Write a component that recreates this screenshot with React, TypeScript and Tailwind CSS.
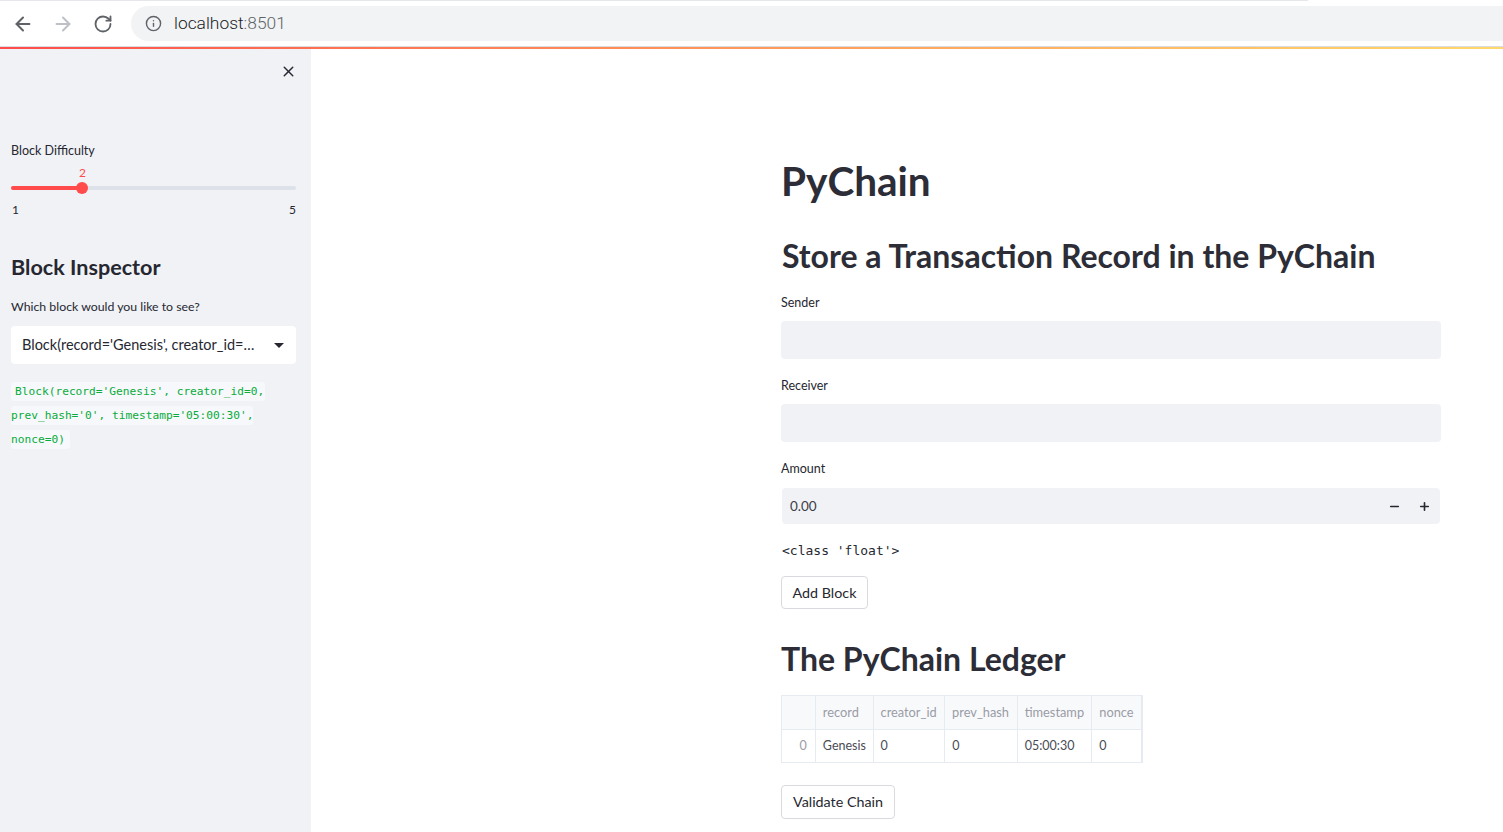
import React from "react";
import { ArrowLeft, ArrowRight, RotateCw, Info, X, Minus, Plus } from "lucide-react";

const sans = "font-['Lato','Noto_Sans',sans-serif]";

function Field({ label }: { label: string }) {
  return (
    <div className="flex flex-col">
      <div className="h-[18px] text-[12.5px] leading-[18px] text-[#262730]">{label}</div>
      <div className="mt-[9px] h-[38px] rounded-[4px] bg-[#f0f2f6]" />
    </div>
  );
}

const headers = [
  { t: "", w: "w-[34px]" },
  { t: "record", w: "w-[58px]" },
  { t: "creator_id", w: "w-[72px]" },
  { t: "prev_hash", w: "w-[73px]" },
  { t: "timestamp", w: "w-[75px]" },
  { t: "nonce", w: "w-[49px]" },
];
const row = ["0", "Genesis", "0", "0", "05:00:30", "0"];

export default function App() {
  return (
    <div className={`flex h-[832px] w-[1503px] flex-col overflow-hidden bg-white ${sans}`}>
      <header className="relative flex h-[46px] shrink-0 items-start bg-white pt-[6px]">
        <div className="absolute left-0 top-0 h-[1px] w-[1308px] bg-[#e5e7eb]" />
        <div className="flex h-[35px] w-[131px] shrink-0 items-center pl-[12px]">
          <ArrowLeft size={22} strokeWidth={2.2} className="text-[#5f6368]" />
          <ArrowRight size={22} strokeWidth={2.2} className="ml-[18px] text-[#bdc1c6]" />
          <RotateCw size={20} strokeWidth={2.2} className="ml-[19px] text-[#5f6368]" />
        </div>
        <div className="flex h-[35px] flex-1 items-center rounded-l-[18px] bg-[#f1f3f4] pl-[14px]">
          <Info size={17} strokeWidth={2} className="text-[#5f6368]" />
          <span className="ml-[12px] font-['Roboto',sans-serif] text-[17.4px] font-light text-[#202124]">
            localhost<span className="text-[#5f6368]">:8501</span>
          </span>
        </div>
      </header>
      <div className="h-[3px] shrink-0 border-t border-[#dadce0] bg-gradient-to-r from-[#ff4b4b] to-[#ffd86b]" />
      <div className="flex min-h-0 flex-1">
        <aside className="flex w-[311px] shrink-0 flex-col bg-[#f0f2f6] px-[11px]">
          <div className="flex h-[44px] items-center justify-end pr-[3px]">
            <X size={17} strokeWidth={2} className="text-[#262730]" />
          </div>
          <div className="mt-[49px] h-[18px] text-[12.5px] leading-[18px] text-[#262730]">Block Difficulty</div>
          <div className="relative mt-[26px] h-[4px] w-[285px] rounded-full bg-[#dde1ea]">
            <div className="h-[4px] w-[71px] rounded-full bg-[#ff4b4b]" />
            <div className="absolute left-[65px] top-[-4px] h-[12px] w-[12px] rounded-full bg-[#ff4b4b]" />
            <div className="absolute left-[68px] top-[-21px] text-[12px] leading-[16px] text-[#ff4b4b]">2</div>
          </div>
          <div className="mt-[12px] flex w-[285px] justify-between text-[12px] leading-[16px] text-[#262730]">
            <span className="pl-[1px]">1</span>
            <span>5</span>
          </div>
          <h2 className="mt-[33px] text-[21.6px] font-bold leading-[32px] text-[#262730]">Block Inspector</h2>
          <div className="mt-[15px] h-[18px] text-[12.3px] leading-[18px] text-[#262730]">Which block would you like to see?</div>
          <div className="mt-[10px] flex h-[38px] w-[285px] items-center justify-between rounded-[4px] bg-white pl-[11px] pr-[12px]">
            <span className="text-[14.5px] text-[#262730]">Block(record='Genesis', creator_id=…</span>
            <span className="h-0 w-0 border-x-[5px] border-t-[5px] border-x-transparent border-t-[#262730]" />
          </div>
          <div className="mt-[16px] w-[285px] font-['DejaVu_Sans_Mono',monospace] text-[11.2px] leading-[24px] text-[#09ab3b]">
            <div><span className="rounded-[3px] bg-[#f6f8fb] py-[3px] pl-[4px] pr-[1px]">Block(record='Genesis', creator_id=0,</span></div>
            <div><span className="rounded-[3px] bg-[#f6f8fb] py-[3px]">prev_hash='0', timestamp='05:00:30',</span></div>
            <div><span className="rounded-[3px] bg-[#f6f8fb] py-[3px] pr-[5px]">nonce=0)</span></div>
          </div>
        </aside>
        <main className="flex flex-1 flex-col pl-[470px] pr-[62px] text-[#262730]">
          <h1 className="mt-[107px] text-[40.5px] font-bold leading-[50px] text-[#2c2d36]">PyChain</h1>
          <h2 className="mt-[30px] pl-[1px] text-[32px] font-bold leading-[40px] text-[#2c2d36]">Store a Transaction Record in the PyChain</h2>
          <div className="mt-[18px]"><Field label="Sender" /></div>
          <div className="mt-[18px]"><Field label="Receiver" /></div>
          <div className="mt-[18px] h-[18px] text-[12.5px] leading-[18px]">Amount</div>
          <div className="ml-[1px] mr-[1px] mt-[10px] flex h-[36px] items-center rounded-[4px] bg-[#f0f2f6] pl-[8px] pr-[9px]">
            <span className="flex-1 text-[13.5px] text-[#3c3d47]">0.00</span>
            <Minus size={13} strokeWidth={3} />
            <Plus size={13} strokeWidth={3} className="ml-[17px]" />
          </div>
          <div className="mt-[18px] h-[18px] pl-[1px] font-['DejaVu_Sans_Mono',monospace] text-[13px] leading-[18px]">{"<class 'float'>"}</div>
          <button className="mt-[16px] flex h-[33px] w-[87px] items-center justify-center rounded-[4px] border border-[#d9dadd] bg-white text-[14.3px]">Add Block</button>
          <h2 className="mt-[30px] text-[32px] font-bold leading-[40px] text-[#2c2d36]">The PyChain Ledger</h2>
          <div className="mt-[16px] w-[362px] border border-r-[2px] border-[#e6eaf1]">
            <div className="flex h-[34px] border-b border-[#e6eaf1] bg-[#f8f9fb]">
              {headers.map((h, i) => (
                <div key={i} className={`${h.w} flex items-center border-r border-[#e6eaf1] pl-[7px] text-[12.8px] text-[#9a9ca6] last:border-r-0`}>{h.t}</div>
              ))}
            </div>
            <div className="flex h-[32px]">
              {row.map((c, i) => (
                <div key={i} className={`${headers[i].w} flex items-center border-r border-[#e6eaf1] text-[12.5px] last:border-r-0 ${i === 0 ? "justify-end pr-[8px] text-[#9a9ca6]" : "pl-[7px] text-[#4a4b55]"}`}>{c}</div>
              ))}
            </div>
          </div>
          <button className="mt-[22px] flex h-[34px] w-[114px] items-center justify-center rounded-[4px] border border-[#d9dadd] bg-white text-[14.3px]">Validate Chain</button>
        </main>
      </div>
    </div>
  );
}
